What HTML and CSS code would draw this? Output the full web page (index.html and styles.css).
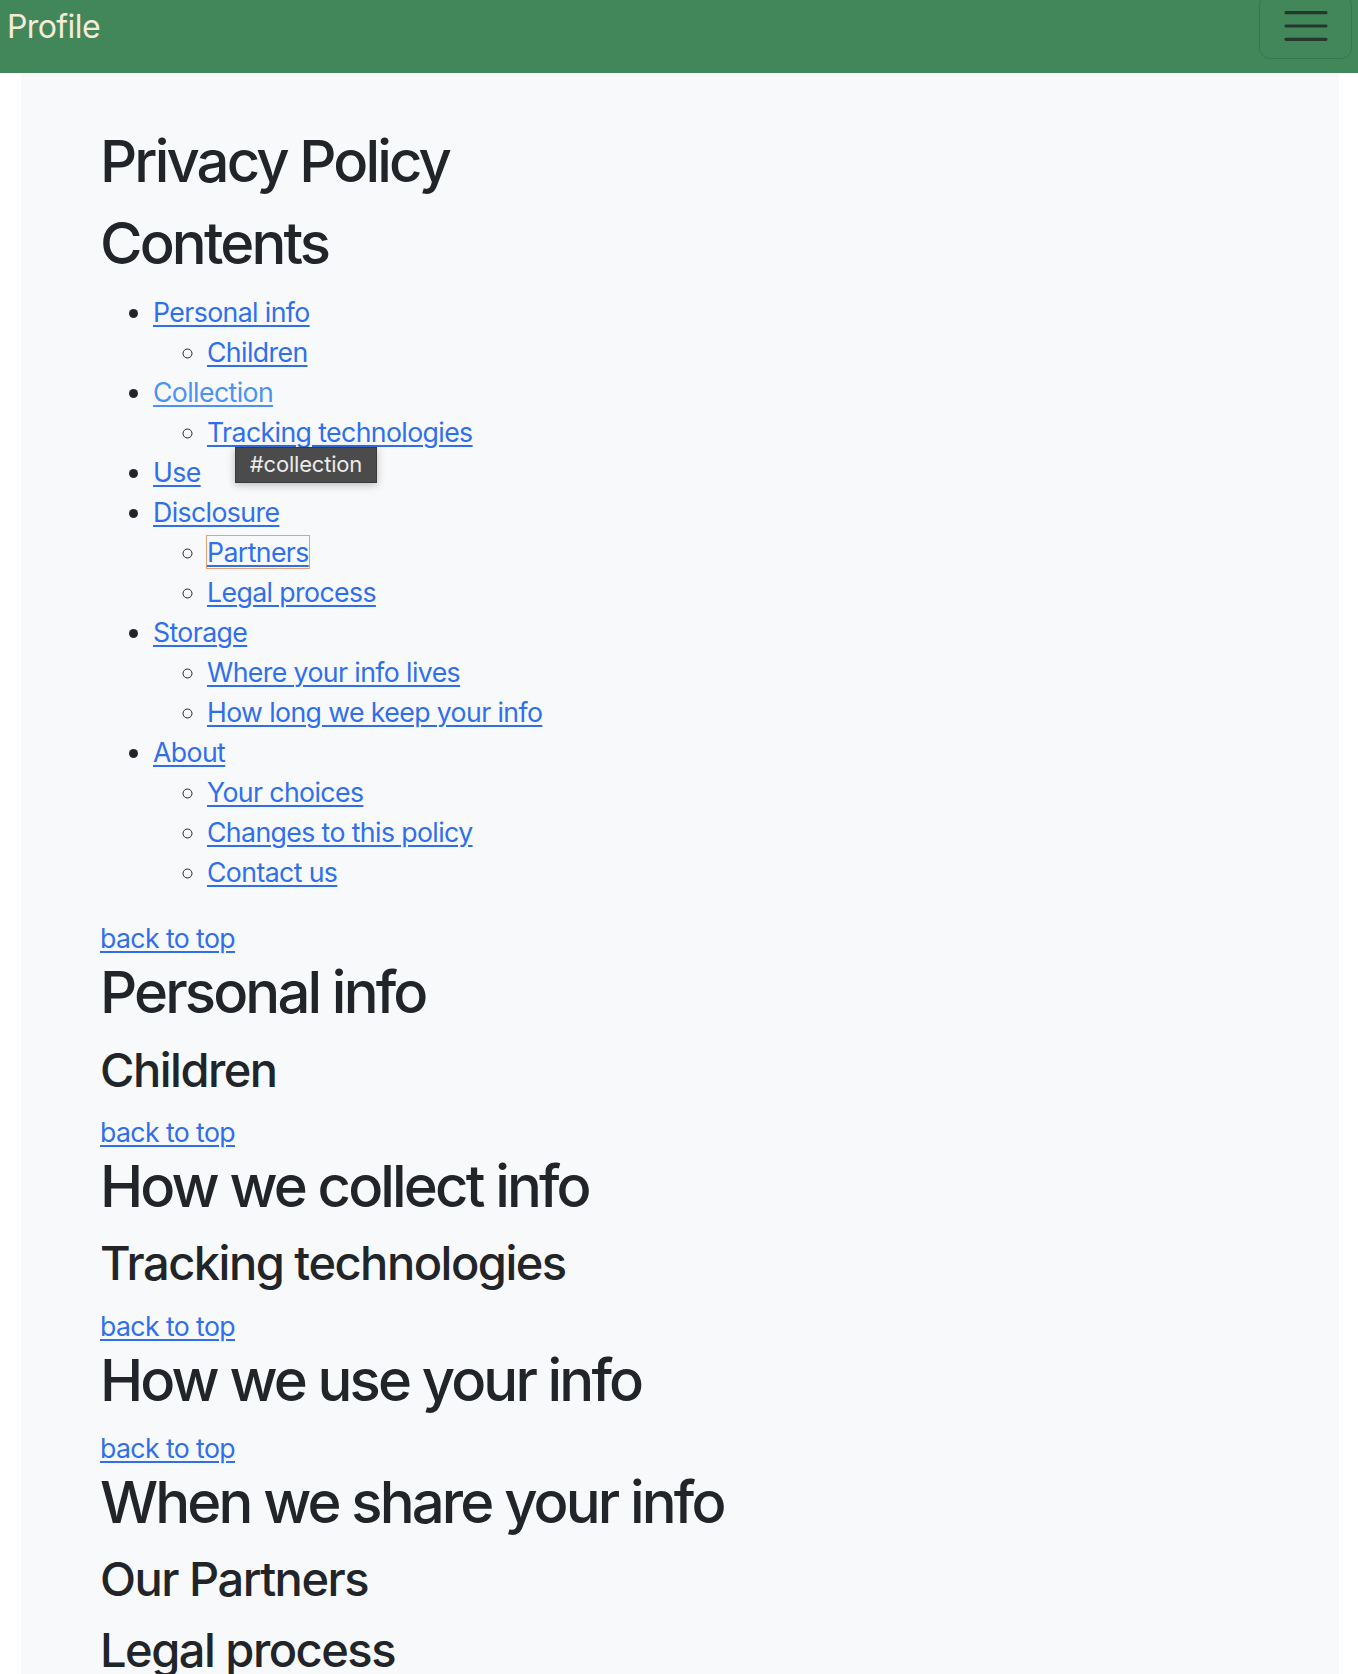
FILE: index.html
```html
<!DOCTYPE html>
<html lang="en">
<head>
<meta charset="utf-8">
<title>Privacy Policy</title>
<link rel="stylesheet" href="styles.css">
</head>
<body>
<nav class="navbar">
  <a class="brand" href="#">Profile</a>
  <button class="toggler" type="button" aria-label="Toggle navigation">
    <svg class="toggler-icon" viewBox="0 0 30 30" width="50" height="50">
      <path d="M3 7h24M3 15h24M3 23h24" stroke="#26382d" stroke-width="1.9" stroke-linecap="round" fill="none"/>
    </svg>
  </button>
</nav>
<main class="page">
  <h1 id="top">Privacy Policy</h1>
  <h1>Contents</h1>
  <div class="toc-wrap">
    <ul class="toc">
      <li><a href="#personal">Personal info</a>
        <ul><li><a href="#children">Children</a></li></ul>
      </li>
      <li><a class="hovered" href="#collection">Collection</a>
        <ul><li><a href="#tracking">Tracking technologies</a></li></ul>
      </li>
      <li><a href="#use">Use</a></li>
      <li><a href="#disclosure">Disclosure</a>
        <ul>
          <li><a class="focused" href="#partners">Partners</a></li>
          <li><a href="#legal">Legal process</a></li>
        </ul>
      </li>
      <li><a href="#storage">Storage</a>
        <ul>
          <li><a href="#where">Where your info lives</a></li>
          <li><a href="#howlong">How long we keep your info</a></li>
        </ul>
      </li>
      <li><a href="#about">About</a>
        <ul>
          <li><a href="#choices">Your choices</a></li>
          <li><a href="#changes">Changes to this policy</a></li>
          <li><a href="#contact">Contact us</a></li>
        </ul>
      </li>
    </ul>
    <div class="tooltip">#collection</div>
  </div>

  <div class="back"><a href="#top">back to top</a></div>
  <h1 id="personal">Personal info</h1>
  <h2 id="children">Children</h2>

  <div class="back"><a href="#top">back to top</a></div>
  <h1 id="collection">How we collect info</h1>
  <h2 id="tracking">Tracking technologies</h2>

  <div class="back"><a href="#top">back to top</a></div>
  <h1 id="use">How we use your info</h1>

  <div class="back"><a href="#top">back to top</a></div>
  <h1 id="disclosure">When we share your info</h1>
  <h2 id="partners">Our Partners</h2>
  <h2 id="legal">Legal process</h2>
</main>
</body>
</html>
```
FILE: styles.css
```css
html, body {
  margin: 0;
  padding: 0;
}
body {
  background: #ffffff;
  color: #212529;
  font-family: Inter, "Noto Sans", "Liberation Sans", sans-serif;
  font-size: 26.67px;
  line-height: 40px;
  letter-spacing: -0.6px;
}
.navbar {
  background: #41875a;
  height: 92.6px;
  margin-top: -20px;
  padding: 0 6px 0 6px;
  box-sizing: border-box;
  display: flex;
  align-items: center;
  justify-content: space-between;
}
.brand {
  color: #f4ebd8;
  text-decoration: none;
  font-size: 32px;
  line-height: 50px;
  letter-spacing: -0.6px;
  padding-left: 1px;
  margin-top: 1px;
}
.toggler {
  width: 93px;
  height: 65px;
  background: transparent;
  border: 1px solid rgba(0, 0, 0, 0.12);
  border-radius: 11px;
  display: flex;
  align-items: center;
  justify-content: center;
  padding: 0;
}
.toggler-icon {
  display: block;
  width: 50px;
  height: 50px;
}
.page {
  background: #f8f9fa;
  margin: 0 19px 0 21px;
  padding: 54.5px 40px 40px 79px;
  min-height: 1700px;
}
h1, h2 {
  font-weight: 500;
  margin: 0 0 13.3px 0;
}
h1 {
  font-size: 58px;
  line-height: 69px;
  letter-spacing: -2.85px;
}
h2 {
  font-size: 47px;
  line-height: 58px;
  letter-spacing: -1.5px;
}
a {
  color: #2f6fed;
  text-decoration: underline;
  text-underline-offset: 3px;
  text-decoration-thickness: 2px;
}
a.hovered {
  color: #4c91f4;
}
a.focused {
  outline: 1px solid #e8a071;
  outline-offset: 0;
}
.toc-wrap {
  position: relative;
}
.toc {
  margin: 0 0 26.67px 0;
  padding-left: 53px;
  list-style: disc;
}
.toc ul {
  margin: 0;
  padding-left: 54px;
  list-style: circle;
}
.back {
  margin: 0;
}
.tooltip {
  position: absolute;
  left: 135px;
  top: 155px;
  width: 142px;
  height: 36px;
  box-sizing: border-box;
  background: #4b4b4b;
  border: 1px solid #3a3a3a;
  color: #ececec;
  font-size: 22px;
  line-height: 33px;
  letter-spacing: -0.2px;
  text-align: center;
  box-shadow: 0 2px 8px rgba(0, 0, 0, 0.25);
}
```
